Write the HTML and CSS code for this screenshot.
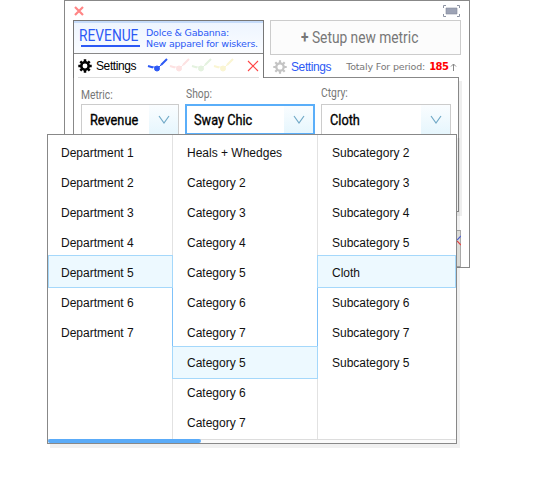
FILE: index.html
```html
<!DOCTYPE html>
<html lang="en">
<head>
<meta charset="utf-8">
<title>Revenue metric</title>
<link rel="stylesheet" href="styles.css">
</head>
<body>
<main class="panel">
  <header class="topbar">
    <svg width="12" height="12" viewBox="0 0 12 12"><path d="M2 2l8 8M10 2l-8 8" stroke="#ff8585" stroke-width="2.2"/></svg>
    <svg width="17" height="12" viewBox="0 0 17 12"><path d="M3 3h11v6H3z" fill="#9da3b5" stroke="#858b9b" stroke-width=".6"/><path d="M3 .5H.5V3M14 .5h2.500V3M3 11.500H.5V9M14 11.500h2.500V9" fill="none" stroke="#8d93a2"/></svg>
  </header>
  <div class="tabs">
    <section class="metric-tab">
      <div class="metric-head">
        <div class="revenue"><span class="fit fit-revenue">REVENUE</span></div>
        <p class="caption"><span class="fit fit-c1">Dolce &amp; Gabanna:</span><span class="fit fit-c2">New apparel for wiskers.</span></p>
      </div>
      <div class="tools">
        <svg class="gear" width="14" height="14" viewBox="-7 -7 14 14"><circle r="3.700" fill="none" stroke="#000" stroke-width="2.500"/><path d="M0-6.700V-4M0 4v2.700M-6.700 0H-4M4 0h2.700M-4.700-4.700l2 2M2.700 2.700l2 2M4.700-4.700l-2 2M-2.700 2.700l-2 2" stroke="#000" stroke-width="2.500"/></svg>
        <span class="settings">Settings</span>
        <span class="lines">
          <svg width="22" height="15" viewBox="0 0 22 15"><g fill="#2c59f5" stroke="#2c59f5"><path d="M1 8l5 1.500M14 7l6-6" fill="none" stroke-width="2"/><path d="M5 9h3l3 1 4-4" fill="none" stroke-width="1"/><circle cx="10" cy="10.500" r="2.500"/></g></svg>
          <svg width="22" height="15" viewBox="0 0 22 15"><g fill="#fde2e2" stroke="#fde2e2"><path d="M1 8l5 1.500M14 7l6-6" fill="none" stroke-width="2"/><path d="M5 9h3l3 1 4-4" fill="none"/><circle cx="10" cy="10.500" r="2.500"/></g></svg>
          <svg width="22" height="15" viewBox="0 0 22 15"><g fill="#e4f2df" stroke="#e4f2df"><path d="M1 8l5 1.500M14 7l6-6" fill="none" stroke-width="2"/><path d="M5 9h3l3 1 4-4" fill="none"/><circle cx="10" cy="10.500" r="2.500"/></g></svg>
          <svg width="22" height="15" viewBox="0 0 22 15"><g fill="#faf5d2" stroke="#faf5d2"><path d="M1 8l5 1.500M14 7l6-6" fill="none" stroke-width="2"/><path d="M5 9h3l3 1 4-4" fill="none"/><circle cx="10" cy="10.500" r="2.500"/></g></svg>
        </span>
        <svg class="remove" width="12" height="12" viewBox="0 0 12 12"><path d="M1 1l10 10M11 1L1 11" stroke="#f44" stroke-width="1.100"/></svg>
      </div>
    </section>
    <section class="new-tab">
      <div class="setup"><span class="fit fit-setup"><b>+</b> Setup new metric</span></div>
      <div class="summary">
        <svg width="14" height="14" viewBox="-7 -7 14 14"><circle r="3.700" fill="none" stroke="#c4c4c4" stroke-width="2.300"/><path d="M0-6.700V-4M0 4v2.700M-6.700 0H-4M4 0h2.700M-4.700-4.700l2 2M2.700 2.700l2 2M4.700-4.700l-2 2M-2.700 2.700l-2 2" stroke="#c4c4c4" stroke-width="2.200"/></svg>
        <span class="settings link">Settings</span>
        <span class="total">Totaly For period:</span>
        <span class="count">185</span>
        <svg width="7" height="8" viewBox="0 0 7 8"><path d="M3.500 8V1M1 3.500L3.500 1 6 3.500" fill="none" stroke="#888"/></svg>
      </div>
    </section>
  </div>
  <div class="config">
    <label class="field metric"><span class="label"><span class="fit fit-label">Metric:</span></span>
      <span class="select"><span class="value"><span class="fit fit-value">Revenue</span></span><span class="arrow"><svg width="12" height="10" viewBox="0 0 12 10"><path d="M1 1l5 7 5-7" fill="none" stroke="#71a9c7" stroke-width="1.200"/></svg></span></span></label>
    <label class="field shop"><span class="label"><span class="fit fit-label">Shop:</span></span>
      <span class="select active"><span class="value"><span class="fit fit-value">Sway Chic</span></span><span class="arrow"><svg width="12" height="10" viewBox="0 0 12 10"><path d="M1 1l5 7 5-7" fill="none" stroke="#71a9c7" stroke-width="1.200"/></svg></span></span></label>
    <label class="field ctgry"><span class="label"><span class="fit fit-label">Ctgry:</span></span>
      <span class="select"><span class="value"><span class="fit fit-value">Cloth</span></span><span class="arrow"><svg width="12" height="10" viewBox="0 0 12 10"><path d="M1 1l5 7 5-7" fill="none" stroke="#71a9c7" stroke-width="1.200"/></svg></span></span></label>
  </div>
  <div class="chart"><svg width="4" height="11" viewBox="0 0 4 11"><path d="M4 1L0 5" stroke="#5264d8" stroke-width="1.200"/><path d="M0 6l4 4" stroke="#e44" stroke-width="1.200"/></svg></div>
</main>
<div class="menu">
  <div class="columns">
    <ul class="departments">
      <li>Department 1</li><li>Department 2</li><li>Department 3</li><li>Department 4</li><li class="selected">Department 5</li><li>Department 6</li><li>Department 7</li>
    </ul>
    <ul class="categories">
      <li>Heals + Whedges</li><li>Category 2</li><li>Category 3</li><li>Category 4</li><li>Category 5</li><li>Category 6</li><li>Category 7</li><li class="selected low">Category 5</li><li>Category 6</li><li>Category 7</li>
    </ul>
    <ul class="subcategories">
      <li>Subcategory 2</li><li>Subcategory 3</li><li>Subcategory 4</li><li>Subcategory 5</li><li class="selected">Cloth</li><li>Subcategory 6</li><li>Subcategory 7</li><li>Subcategory 5</li>
    </ul>
  </div>
  <div class="scroll"><div class="thumb"></div></div>
</div>
</body>
</html>
```
FILE: styles.css
```css
* { box-sizing: border-box; }
body {
  margin: 0;
  height: 500px;
  overflow: hidden;
  background: #fff;
  font-family: "Liberation Sans", Arial, sans-serif;
}
svg { display: block; flex: none; }
ul, p { margin: 0; padding: 0; list-style: none; }
.fit {
  display: inline-block;
  white-space: nowrap;
  transform-origin: left center;
}
.fit-revenue { transform: scaleX(.86); }
.fit-setup { transform: scaleX(.86); }
.fit-label { transform: scaleX(.86); }
.fit-value { transform: scaleX(.91); }

.panel {
  width: 406px;
  height: 268px;
  margin-left: 64px;
  border: 1px solid #888;
}
.topbar {
  display: flex;
  justify-content: space-between;
  height: 19px;
  padding: 4px 9px 0 8px;
}
.tabs {
  display: flex;
  gap: 6px;
  height: 57px;
  padding-left: 8px;
}
.metric-tab {
  position: relative;
  z-index: 1;
  width: 191px;
  height: 58px;
  border: 1px solid #777;
  border-bottom: 0;
  background: #fff;
}
.metric-head {
  display: flex;
  height: 33px;
  border-bottom: 1px solid #888;
  border-top: 2px solid #c5dbfa;
  background: linear-gradient(#eef5ff, #fafcff);
  color: #2c59f5;
}
.revenue {
  width: 59px;
  height: 24px;
  margin-left: 7px;
  border-bottom: 2px solid #2c59f5;
  font: 16px/26px Roboto, sans-serif;
}
.revenue .fit { margin-left: -2px; }
.caption {
  display: flex;
  flex-direction: column;
  padding: 4px 0 0 6px;
  width: 112px;
  font: 9.500px/11px "DejaVu Sans", sans-serif;
  letter-spacing: -.21px;
}
.tools {
  display: flex;
  align-items: center;
  height: 24px;
  margin: 0 4px;
  border-bottom: 1px solid #ddd;
}
.settings { margin-left: 4px; font-size: 12px; letter-spacing: -.4px; }
.lines { display: flex; margin-left: 11px; }
.remove { margin-left: auto; }
.new-tab { width: 191px; }
.setup {
  height: 35px;
  border: 1px solid #ccc;
  padding-left: 30px;
  background: #fcfcfc;
  color: #777;
  font: 16px/34px Roboto, sans-serif;
}
.summary {
  display: flex;
  align-items: center;
  height: 22px;
  padding: 2px 0 0 3px;
}
.link { color: #2c59f5; }
.total {
  width: 81px;
  margin-left: 15px;
  white-space: nowrap;
  color: #777;
  font: 9.500px/14px "DejaVu Sans", sans-serif;
  letter-spacing: -.18px;
}
.count {
  width: 21px;
  margin-left: 2px;
  color: #f00;
  font: bold 10px/14px "DejaVu Sans", sans-serif;
  letter-spacing: -.6px;
}

.config {
  display: flex;
  width: 386px;
  height: 135px;
  margin-left: 8px;
  padding: 9px 0 0 7px;
  border: 1px solid #888;
  background: #fff;
  box-shadow: 3px 4px #eee;
}
.field { display: block; }
.metric { width: 98px; padding-top: 1px; margin-right: 6px; }
.shop { width: 130px; margin-right: 6px; }
.ctgry { width: 130px; }
.label {
  display: block;
  height: 16px;
  color: #777;
  font: 12px/15px Roboto, sans-serif;
}
.shop .label { height: 17px; margin-left: 1px; }
.ctgry .label { height: 17px; line-height: 13px; }
.select {
  display: flex;
  height: 31px;
  border: 1px solid #ccc;
  background: #fff;
}
.select.active { border: 2px solid #5aaef9; }
.value {
  flex: 1;
  padding-left: 8px;
  color: #000;
  font: 14px/31px Roboto, sans-serif;
  -webkit-text-stroke: .35px #000;
}
.active .value { padding-left: 7px; line-height: 29px; }
.arrow {
  display: flex;
  align-items: center;
  justify-content: center;
  width: 29px;
  background: linear-gradient(#fafdff, #e6f6fd);
}
.chart {
  width: 9px;
  height: 37px;
  margin: 18px 0 0 387px;
  padding: 4px 0 0 4px;
  border: 1px solid #aaa;
  background: #e9e9e5;
}

.menu {
  position: absolute;
  z-index: 2;
  left: 47px;
  top: 134px;
  width: 410px;
  height: 310px;
  border: 1px solid #888;
  background: #fff;
  box-shadow: 3px 4px rgba(0, 0, 0, .06);
}
.columns { display: flex; height: 304px; }
.columns ul { padding-top: 3px; }
.departments { width: 124px; }
.categories { width: 146px; border: solid #e2e2e2; border-width: 0 1px; }
.subcategories { flex: 1; }
li {
  height: 30px;
  padding-left: 13px;
  color: #111;
  font-size: 12px;
  line-height: 30px;
}
.categories li, .subcategories li { padding-left: 14px; }
.columns .selected {
  position: relative;
  height: 33px;
  margin: -3px -1px 0 0;
  padding-left: 12px;
  border: 1px solid #a5d8fb;
  background: #edf9ff;
  line-height: 34px;
}
.columns .subcategories .selected { margin: -3px 0 0 -1px; padding-left: 14px; }
.columns .categories .low { margin: -2px -1px -1px; padding-left: 14px; line-height: 32px; }
.low::before,
.low::after {
  content: "";
  position: absolute;
  bottom: 32px;
  width: 1px;
  height: 58px;
  background: #7fc2fa;
}
.low::before { left: -1px; }
.low::after { right: -1px; }
.scroll { height: 4px; border-top: 1px solid #ddd; background: #fafafa; }
.thumb { width: 153px; height: 4px; margin-top: -1px; border-radius: 2px; background: #5aabf8; }
```
